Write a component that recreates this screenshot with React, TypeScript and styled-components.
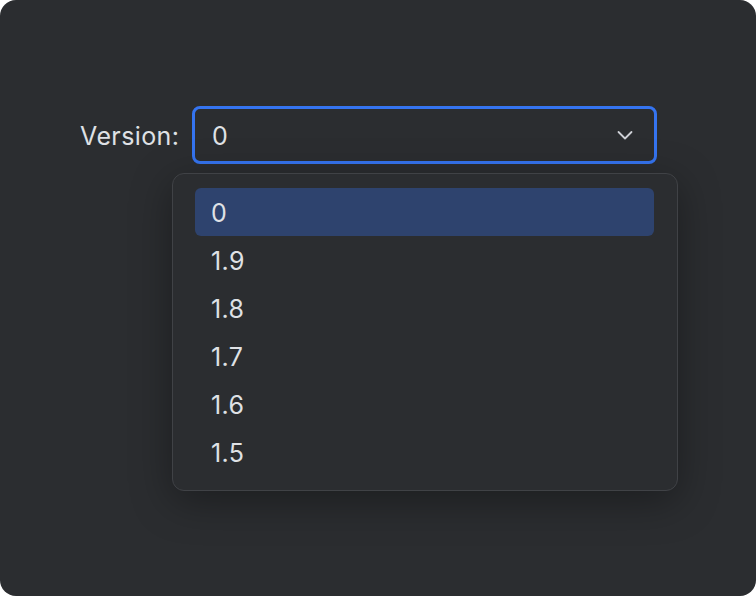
import styled, { createGlobalStyle } from "styled-components";

const GlobalStyle = createGlobalStyle`
  html, body {
    margin: 0;
    padding: 0;
    background: #ffffff;
  }
  body {
    font-family: Inter, "Noto Sans", sans-serif;
    -webkit-font-smoothing: antialiased;
  }
`;

const Window = styled.div`
  width: 756px;
  height: 596px;
  box-sizing: border-box;
  background: #2b2d30;
  border-radius: 16px;
  padding: 106px 0 0 80px;
  color: #dfe1e5;
`;

const Row = styled.div`
  display: flex;
  align-items: flex-start;
`;

const Label = styled.span`
  flex: 0 0 112px;
  font-size: 25px;
  letter-spacing: 0.4px;
  line-height: 58px;
  padding-top: 1px;
  color: #dfe1e5;
`;

const Field = styled.div`
  position: relative;
  width: 465px;
  height: 58px;
  box-sizing: border-box;
  border: 3px solid #3574f0;
  border-radius: 8px;
  display: flex;
  align-items: center;
  justify-content: space-between;
  padding: 2px 20px 0 17px;
  font-size: 25px;
`;

const Chevron = styled.svg`
  width: 18px;
  height: 18px;
  margin-top: -2px;
  color: #ced0d6;
`;

const Popup = styled.ul`
  position: absolute;
  top: 64px;
  left: -23px;
  width: 506px;
  box-sizing: border-box;
  margin: 0;
  padding: 14px 23px 14px 22px;
  list-style: none;
  background: #2b2d30;
  border: 1px solid #404246;
  border-radius: 12px;
  box-shadow: 0 10px 40px rgba(0, 0, 0, 0.35);
`;

const Item = styled.li<{ $selected?: boolean }>`
  height: 48px;
  display: flex;
  align-items: center;
  padding: 1px 0 0 16px;
  box-sizing: border-box;
  border-radius: 6px;
  font-size: 25px;
  letter-spacing: 0.4px;
  color: #dfe1e5;
  background: ${(p) => (p.$selected ? "#2e436e" : "transparent")};
`;

const versions = ["0", "1.9", "1.8", "1.7", "1.6", "1.5"];

export default function App() {
  return (
    <>
      <GlobalStyle />
      <Window>
        <Row>
          <Label>Version:</Label>
          <Field>
            <span>0</span>
            <Chevron viewBox="0 0 18 18" fill="none">
              <path
                d="M2.5 6L9 12.5L15.5 6"
                stroke="currentColor"
                strokeWidth="1.8"
                strokeLinecap="round"
                strokeLinejoin="round"
              />
            </Chevron>
            <Popup>
              {versions.map((v, i) => (
                <Item key={v} $selected={i === 0}>
                  {v}
                </Item>
              ))}
            </Popup>
          </Field>
        </Row>
      </Window>
    </>
  );
}
